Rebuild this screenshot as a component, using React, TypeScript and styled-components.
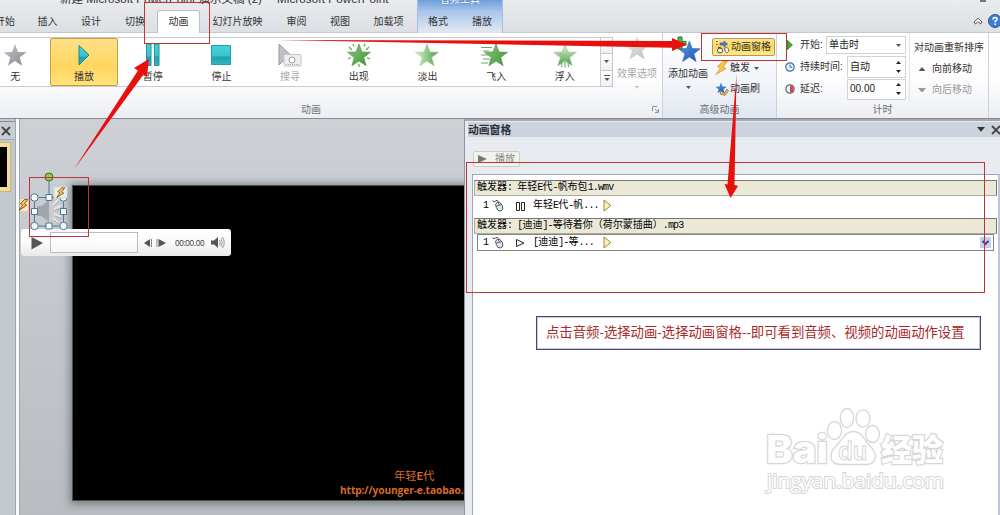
import React from 'react';
import styled, { createGlobalStyle, css } from 'styled-components';

const Global = createGlobalStyle`
  * { box-sizing: border-box; }
  body { margin: 0; overflow: hidden; background: #c6cacf; }
`;

const UI = `"Liberation Sans", "Noto Sans CJK SC", sans-serif`;
const SIM = `"Liberation Mono", "Noto Sans CJK SC", monospace`;

const Window = styled.div`
  position: relative;
  width: 1000px;
  height: 515px;
  overflow: hidden;
  display: flex;
  flex-direction: column;
  font: 10px/14px ${UI};
  color: #333;
  white-space: nowrap;
`;

/* Title and tabs */
const Header = styled.header`
  height: 33px;
  flex: none;
  display: flex;
  flex-direction: column;
  background: linear-gradient(#e9ebee, #dcdfe3);
  border-bottom: 1px solid #c3c8cf;
`;
const TitleBar = styled.div`
  height: 10px;
  display: flex;
  padding-left: 60px;
  line-height: 14px;
`;
const Title = styled.span<{ $w: number; $space?: number }>`
  width: ${p => p.$w}px;
  flex: none;
  margin-top: -8px;
  font-size: 11.5px;
  color: #333;
  letter-spacing: ${p => p.$space ?? 0}px;
`;
const ContextTitle = styled.div`
  width: 86px;
  height: 33px;
  flex: none;
  background: linear-gradient(#6f9edb, #a9c6ec 35%, #dce5f0 90%);
  border-left: 1px solid #a5bfe2;
  border-right: 1px solid #a5bfe2;
  color: #fff;
  text-align: center;
  line-height: 14px;
  text-shadow: 0 0 2px #3668a8;
  span { display: block; margin-top: -7px; }
`;
const WindowButtons = styled.div`
  margin-left: auto;
  width: 44px;
  display: flex;
  gap: 18px;
  i { width: 6px; height: 2px; background: #777; }
  i:first-child { background: #eee; }
`;
const Tabs = styled.nav`
  height: 22px;
  display: flex;
  align-items: stretch;
`;
const Tab = styled.div<{ $w: number; $active?: boolean }>`
  width: ${p => p.$w}px;
  flex: none;
  line-height: 24px;
  display: flex;
  justify-content: center;
  ${p => p.$active && css`
    background: #fff;
    border: 1px solid #b9bfc7;
    border-bottom: 0;
    border-radius: 3px 3px 0 0;
    height: 24px;
    line-height: 22px;
  `}
`;
const TabTools = styled.div`
  margin-left: auto;
  width: 27px;
  display: flex;
  align-items: center;
  gap: 5px;
  svg { flex: none; }
`;

/* Ribbon */
const Ribbon = styled.section`
  height: 86px;
  flex: none;
  display: flex;
  background: linear-gradient(#fff, #fdfdfe 55%, #eceef2);
  border-bottom: 1px solid #858b93;
`;
const Group = styled.div<{ $w: number; $tint?: boolean }>`
  width: ${p => p.$w}px;
  flex: none;
  display: flex;
  flex-direction: column;
  border-right: 1px solid #cdd2d9;
  ${p => p.$tint && 'background: linear-gradient(#fff, #f1f4f9 60%, #e1e7ef);'}
`;
const GroupBody = styled.div`
  height: 68px;
  flex: none;
  display: flex;
`;
const GroupName = styled.div<{ $pad?: number }>`
  height: 17px;
  display: flex;
  align-items: center;
  justify-content: ${p => (p.$pad ? 'flex-start' : 'center')};
  padding-left: ${p => p.$pad ?? 0}px;
  color: #6b7078;
  svg { margin-left: auto; margin-right: 3px; }
`;
const Gallery = styled.div`
  width: 601px;
  height: 50px;
  margin-top: 4px;
  display: flex;
  overflow: hidden;
  border: 1px solid #c9cdd2;
  border-left: 0;
  background: #fff;
`;
const Effect = styled.div<{ $active?: boolean; $muted?: boolean }>`
  width: 68.7px;
  flex: none;
  height: 48px;
  display: flex;
  flex-direction: column;
  align-items: center;
  padding-top: 5px;
  color: ${p => (p.$muted ? '#a5a5a5' : '#333')};
  &:first-child { margin-left: -19px; }
  svg { height: 24px; flex: none; overflow: visible; }
  span { line-height: 13px; margin-top: 3px; }
  ${p => p.$active && css`
    background: linear-gradient(#ffe08a, #ffd75f 60%, #ffe27c);
    border: 1px solid #c79a3c;
    border-radius: 2px;
    padding-top: 4px;
  `}
`;
const GalleryScroll = styled.div`
  width: 12px;
  height: 50px;
  margin-top: 4px;
  display: flex;
  flex-direction: column;
  border: 1px solid #c3c7cc;
  border-left: 0;
  div {
    flex: 1;
    display: flex;
    align-items: center;
    justify-content: center;
    background: linear-gradient(#fff, #eef0f3);
  }
  div + div { border-top: 1px solid #c3c7cc; }
`;
const BigButton = styled.div<{ $w: number; $muted?: boolean; $gap: number }>`
  width: ${p => p.$w}px;
  flex: none;
  display: flex;
  flex-direction: column;
  align-items: center;
  padding-top: 2px;
  color: ${p => (p.$muted ? '#a8a8a8' : '#333')};
  svg { flex: none; overflow: visible; }
  span { line-height: 14px; margin: ${p => p.$gap}px 0 5px; }
`;
const Stack = styled.div<{ $w: number }>`
  width: ${p => p.$w}px;
  flex: none;
  display: flex;
  flex-direction: column;
  padding-top: 5px;
  gap: 3px;
`;
const TimingStack = styled(Stack)`
  padding: 1px 0 0 8px;
  gap: 0;
`;
const Tool = styled.div<{ $active?: boolean }>`
  width: 63px;
  height: 18px;
  margin-left: -1px;
  display: flex;
  align-items: center;
  padding-left: 2px;
  gap: 1px;
  border: 1px solid transparent;
  svg { flex: none; }
  svg:last-child { margin-left: 3px; }
  ${p => p.$active && css`
    background: linear-gradient(#ffe391, #fbd75a 50%, #ffe98e);
    border-color: #b8985a;
    border-radius: 2px;
  `}
`;
const TimingRow = styled.div`
  height: 22px;
  display: flex;
  align-items: center;
  svg { flex: none; }
`;
const TimingLabel = styled.span<{ $w: number }>`
  width: ${p => p.$w}px;
  padding-left: 5px;
  flex: none;
`;
const Field = styled.div<{ $w: number; $h: number }>`
  width: ${p => p.$w}px;
  height: ${p => p.$h}px;
  background: #fff;
  border: 1px solid #d0d3d8;
  display: flex;
  align-items: center;
  justify-content: space-between;
  padding: 0 4px 0 2px;
  color: #222;
`;
const OrderColumn = styled.div`
  width: 83px;
  padding: 8px 0 0 4px;
  border-left: 1px solid #e2e4e8;
  display: flex;
  flex-direction: column;
  gap: 7px;
`;
const Order = styled.div<{ $muted?: boolean }>`
  display: flex;
  align-items: center;
  gap: 6px;
  padding-left: 4px;
  color: ${p => (p.$muted ? '#999' : '#333')};
`;

/* Workspace */
const Workspace = styled.main`
  height: 396px;
  flex: none;
  display: flex;
`;
const Thumbs = styled.aside`
  width: 15px;
  flex: none;
  padding-top: 2px;
  background: #c3c8ce;
`;
const ThumbsHead = styled.div`
  height: 19px;
  background: #c8cdd3;
  border-top: 1px solid #8a9097;
  border-bottom: 1px solid #a4a9af;
  display: flex;
  align-items: center;
`;
const Thumb = styled.div`
  width: 10px;
  height: 48px;
  margin-top: 3px;
  background: #000;
  border: solid #f3dd98;
  border-width: 4px 3px 4px 0;
  outline: 1px solid #c9b57c;
`;
const Splitter = styled.div`
  width: 5px;
  flex: none;
  background: #f8f9fb;
  border: solid #a1a6ad;
  border-width: 0 1px;
`;
const Canvas = styled.div`
  width: 444px;
  flex: none;
  overflow: hidden;
  padding: 66px 0 0 52px;
  background: linear-gradient(#cdd1d6, #b9bdc2);
`;
const Slide = styled.div`
  width: 400px;
  height: 316px;
  background: #000;
  border: 1px solid #4c4e50;
  box-shadow: 0 1px 8px 2px rgba(60, 70, 70, .55);
  display: flex;
  flex-direction: column;
  justify-content: flex-end;
  padding: 0 0 2px 267px;
  color: #d96b25;
  font: 11.3px/14px Lato, "Noto Sans CJK SC", sans-serif;
  span:first-child { padding-left: 54px; }
`;
const Url = styled.span`
  font: bold 10.1px/15px "Open Sans", sans-serif;
  letter-spacing: -.06px;
`;
const Pane = styled.aside`
  width: 536px;
  flex: none;
  padding: 2px 0 0 3px;
  background: #e8ebf0;
  border-left: 1px solid #8d949d;
  border-top: 2px solid #a2a9b1;
  display: flex;
  flex-direction: column;
`;
const PaneHead = styled.div`
  height: 15px;
  margin-top: -1px;
  flex: none;
  display: flex;
  align-items: center;
  background: #ccd3dc;
  font-weight: bold;
  font-size: 10.8px;
  color: #2c3038;
  overflow: hidden;
  svg { flex: none; }
  svg:first-of-type { margin-left: auto; margin-right: 5px; }
  svg:last-of-type { margin-right: -2px; }
`;
const PlayButton = styled.div`
  width: 47px;
  height: 16px;
  margin: 14px 0 7px 5px;
  flex: none;
  display: flex;
  align-items: center;
  gap: 8px;
  padding-left: 4px;
  border: 1px solid #cfcdbe;
  border-radius: 2px;
  background: #f2f2ec;
  color: #888;
`;
const List = styled.div`
  width: 529px;
  margin-left: 4px;
  flex: 1;
  padding: 5px 1px 0 1px;
  background: #fff;
  border: solid #98a8bd;
  border-width: 1px 3px 0 1px;
  border-right-color: #bec6d8;
  font: 10px/14px ${SIM};
  color: #000;
`;
const Latin = styled.span`
  letter-spacing: -.85px;
`;
const Trigger = styled.div`
  height: 16px;
  display: flex;
  align-items: center;
  white-space: pre;
  padding-left: 2px;
  background: #ebe8d8;
  border: 1px solid #77766e;
  border-bottom-color: #aeac9f;
  border-left-color: #aeac9f;
`;
const Entry = styled.div<{ $selected?: boolean }>`
  height: 17px;
  width: 517px;
  margin: ${p => (p.$selected ? '0 0 0 3px' : '1px 0 4px 3px')};
  border: 1px solid ${p => (p.$selected ? '#85867f' : 'transparent')};
  display: flex;
  align-items: center;
  padding: 0 2px 0 5px;
  svg { flex: none; }
`;
const Cell = styled.span<{ $w: number }>`
  width: ${p => p.$w}px;
  flex: none;
  display: flex;
  align-items: center;
`;
const MenuArrow = styled.div`
  width: 11px;
  height: 11px;
  margin-left: auto;
  background: #c3cdf3;
  border-radius: 1px;
  display: flex;
  align-items: center;
  justify-content: center;
`;

/* Objects floating over the slide canvas */
const AudioObject = styled.svg`
  position: absolute;
  left: 18px;
  top: 170px;
`;
const Player = styled.div`
  position: absolute;
  left: 21px;
  top: 229px;
  width: 210px;
  height: 27px;
  display: flex;
  align-items: center;
  padding: 0 6px 0 10px;
  border-radius: 3px;
  background: linear-gradient(#fff, #fafafa 50%, #e9e9eb);
  color: #444;
  font-size: 8.3px;
  svg { flex: none; }
  time { margin: 0 7px 0 8px; letter-spacing: -.4px; }
`;
const Track = styled.div`
  width: 88px;
  height: 21px;
  margin: 0 6px 0 7px;
  flex: none;
  background: linear-gradient(#fff, #f6f6f7);
  border: 1px solid #bcbcbe;
`;
const Mark = styled.div<{ $x: number; $y: number; $w: number; $h: number }>`
  position: absolute;
  left: ${p => p.$x}px;
  top: ${p => p.$y}px;
  width: ${p => p.$w}px;
  height: ${p => p.$h}px;
  border: 1px solid #c03436;
`;
const Arrows = styled.svg`
  position: absolute;
  left: 0;
  top: 0;
`;
const Note = styled.div`
  position: absolute;
  left: 536px;
  top: 316px;
  width: 445px;
  height: 34px;
  padding-left: 9px;
  border: 1px solid #45457c;
  outline: 1px solid #c9c9de;
  outline-offset: -2px;
  background: #fff;
  color: #a82a2a;
  font: 13.36px/32px ${UI};
`;
const Watermark = styled.div`
  position: absolute;
  left: 764px;
  top: 404px;
  width: 184px;
  height: 94px;
`;

const STAR = 'M12 1 L14.9 9 L23.4 9.3 L16.7 14.5 L19.1 22.7 L12 18 L4.9 22.7 L7.3 14.5 L.6 9.3 L9.1 9 Z';
const BOLT = 'M8 .5 L2.5 5.5 L5.5 7 L1 13.5 L11 7.5 L8 5.8 L12.5 .5Z';

const Defs = () => (
  <defs>
    <linearGradient id="teal" x2="0" y2="1"><stop offset="0" stopColor="#48d3dc" /><stop offset=".55" stopColor="#38c3ce" /><stop offset=".6" stopColor="#229fad" /><stop offset="1" stopColor="#36b6c2" /></linearGradient>
    <linearGradient id="green" x2="1" y2="1"><stop offset="0" stopColor="#8cc77a" /><stop offset="1" stopColor="#3f9436" /></linearGradient>
    <linearGradient id="fade" x2="1" y2="0"><stop offset="0" stopColor="#d9efd0" /><stop offset="1" stopColor="#4da043" /></linearGradient>
    <linearGradient id="float" x2="0" y2="1"><stop offset="0" stopColor="#e3f1df" /><stop offset="1" stopColor="#4f9f47" /></linearGradient>
    <linearGradient id="grey" x2="1" y2="1"><stop offset="0" stopColor="#c4c6ca" /><stop offset="1" stopColor="#84878c" /></linearGradient>
    <linearGradient id="pale" x2="1" y2="1"><stop offset="0" stopColor="#e6e6e9" /><stop offset="1" stopColor="#bfc0c5" /></linearGradient>
    <linearGradient id="blue" x2="1" y2="1"><stop offset="0" stopColor="#5b9be8" /><stop offset="1" stopColor="#1c54b4" /></linearGradient>
  </defs>
);

const Star = ({ fill, stroke, size = 24, children }: { fill: string; stroke?: string; size?: number; children?: React.ReactNode }) => (
  <svg width={size} height={size} viewBox="0 0 24 24"><path d={STAR} fill={fill} stroke={stroke} strokeWidth=".6" />{children}</svg>
);
const Down = ({ c = '#555', up = false, w = 5 }: { c?: string; up?: boolean; w?: number }) => (
  <svg width={w} height={w * 0.6} viewBox="0 0 10 6"><path d={up ? 'M0 6 L5 0 L10 6Z' : 'M0 0 H10 L5 6Z'} fill={c} /></svg>
);
const Spin = () => (
  <svg width="5" height="14" viewBox="0 0 5 14"><path d="M0 4 L2.5 1 L5 4Z M0 10 H5 L2.5 13Z" fill="#222" /></svg>
);
const Close = () => (
  <svg width="12" height="10" viewBox="0 0 12 10"><path d="M2 1 L10 9 M10 1 L2 9" stroke="#444" strokeWidth="1.8" /></svg>
);
const Bolt = ({ size = 14 }: { size?: number }) => (
  <svg width={size} height={size} viewBox="0 0 14 14"><path d={BOLT} fill="#f9c64a" stroke="#cf8b1d" strokeWidth=".7" /></svg>
);
const Clock = ({ late }: { late?: boolean }) => (
  <svg width="10" height="10" viewBox="0 0 10 10">
    <circle cx="5" cy="5" r="4.2" fill="#eef4fc" stroke={late ? '#68687e' : '#4270a8'} strokeWidth="1.2" />
    {late ? <path d="M5 1.5 A3.5 3.5 0 0 1 8.5 5 A3.5 3.5 0 0 1 5 8.5Z" fill="#d4444c" /> : <path d="M5 2.5 V5.2 H7.3" fill="none" stroke="#35649b" />}
  </svg>
);
const Mouse = () => (
  <svg width="12" height="13" viewBox="0 0 12 13">
    <path d="M.5 1.5 Q2 4 3.5 2 M3.5 2 Q5 .5 6.5 2.5" fill="none" stroke="#444" />
    <path d="M3.5 5 Q5.5 2 8 3.5 Q11.5 6.5 10.8 10.5 Q9 12.8 6 11.5 Q4 9 3.5 5Z" fill="#dfe5ec" stroke="#4b5560" />
    <path d="M4.2 7.3 L9.5 5.5 M6 3 L7.5 6.3" stroke="#4b5560" strokeWidth=".8" />
  </svg>
);
const YellowPlay = () => (
  <svg width="9" height="13" viewBox="0 0 9 13"><path d="M1 1 L7.8 6.5 L1 12Z" fill="#fff2b8" stroke="#9a8440" /></svg>
);

export default function App() {
  return (
    <Window>
      <Global />
      <svg width="0" height="0" style={{ position: 'absolute' }}><Defs /></svg>
      <Header>
        <TitleBar>
          <Title $w={217} $space={0.02}>新建 Microsoft PowerPoint 演示文稿 (2)</Title>
          <Title $w={140} $space={0.15}>Microsoft PowerPoint</Title>
          <ContextTitle><span>音频工具</span></ContextTitle>
          <WindowButtons><i /><i /></WindowButtons>
        </TitleBar>
        <Tabs>
          <Tab $w={26}><span style={{ marginLeft: -16 }}>开始</span></Tab>
          <Tab $w={43}>插入</Tab>
          <Tab $w={44}>设计</Tab>
          <Tab $w={44}>切换</Tab>
          <Tab $w={43} $active>动画</Tab>
          <Tab $w={75}>幻灯片放映</Tab>
          <Tab $w={43}>审阅</Tab>
          <Tab $w={44}>视图</Tab>
          <Tab $w={53}>加载项</Tab>
          <Tab $w={46}>格式</Tab>
          <Tab $w={42}>播放</Tab>
          <TabTools>
            <svg width="10" height="9" viewBox="0 0 10 9"><path d="M1 5 L5 1.2 L9 5 L7.5 7 L5 4.6 L2.5 7Z" fill="#fff" stroke="#555" /></svg>
            <svg width="14" height="14" viewBox="0 0 14 14"><circle cx="7" cy="7" r="6.5" fill="#3f7bd0" stroke="#2b5a9f" /><path d="M5 5.5 Q5 3.5 7 3.5 Q9 3.5 9 5.2 Q9 6.4 7.2 7.2 V8.5 M7.2 9.6 V11" fill="none" stroke="#fff" strokeWidth="1.5" /></svg>
          </TabTools>
        </Tabs>
      </Header>

      <Ribbon>
        <Group $w={663}>
          <GroupBody>
            <Gallery>
              <Effect><Star fill="url(#grey)" /><span>无</span></Effect>
              <Effect $active>
                <svg width="12" height="24"><path d="M1 2.5 L11 12 L1 22Z" fill="url(#teal)" stroke="#20858f" /></svg>
                <span>播放</span>
              </Effect>
              <Effect>
                <svg width="16" height="24"><path d="M1.5 1 H6 V22.5 H1.5Z M9.5 1 H14 V22.5 H9.5Z" fill="url(#teal)" stroke="#24909a" /></svg>
                <span>暂停</span>
              </Effect>
              <Effect>
                <svg width="20" height="24"><path d="M.5 2.5 H19.5 V21.5 H.5Z" fill="url(#teal)" stroke="#249eab" /></svg>
                <span>停止</span>
              </Effect>
              <Effect $muted>
                <svg width="24" height="24"><path d="M1 1 L12 11.5 L1 22Z" fill="#bfbfc4" stroke="#97979d" /><rect x="6" y="11.5" width="17" height="11.5" rx="1" fill="#efeff1" stroke="#c5c5c9" /><circle cx="14" cy="17" r="3" fill="#fff" stroke="#9b9ba0" /><path d="M8 21.5 H22" stroke="#aaa" strokeDasharray="1 1" /></svg>
                <span>搜寻</span>
              </Effect>
              <Effect>
                <Star fill="url(#green)" stroke="#438c3b"><path d="M2 4 L5 7 M6 1 L7 3.5 M18 1 L17 3.5 M22 4 L19 7 M1 16 L4 14.5 M23 16 L20 14.5 M12 21 V24" stroke="#67a95d" strokeWidth="1.3" /></Star>
                <span>出现</span>
              </Effect>
              <Effect><Star fill="url(#fade)" stroke="#9aca91" /><span>淡出</span></Effect>
              <Effect>
                <Star fill="url(#green)" stroke="#438c3b"><path d="M-3 4.5 H8 M-1 8 H5 M-3 12 H4 M-1 16 H6 M-3 20 H4" stroke="#69a65f" strokeWidth="1" /></Star>
                <span>飞入</span>
              </Effect>
              <Effect>
                <Star fill="url(#float)" stroke="#9cc494"><path d="M9 20 L8.5 24 M12 19 V24.5 M15 20 L15.5 24" stroke="#67a95d" strokeWidth="1.1" /></Star>
                <span>浮入</span>
              </Effect>
            </Gallery>
            <GalleryScroll>
              <div />
              <div><Down /></div>
              <div><svg width="6" height="7" viewBox="0 0 6 7"><path d="M0 .5 H6" stroke="#555" /><path d="M.5 3 H5.5 L3 6Z" fill="#555" /></svg></div>
            </GalleryScroll>
            <BigButton $w={48} $gap={6} $muted>
              <Star fill="url(#pale)" size={26} />
              <span>效果选项</span>
              <Down c="#b5b5b5" w={4} />
            </BigButton>
          </GroupBody>
          <GroupName $pad={301}>
            动画
            <svg width="7" height="7" viewBox="0 0 7 7"><path d="M.5 5 V.5 H5 M3 3 L6 6 M6.5 3 V6.5 H3" fill="none" stroke="#8b9097" /></svg>
          </GroupName>
        </Group>

        <Group $w={114} $tint>
          <GroupBody>
            <BigButton $w={50} $gap={3}>
              <svg width="30" height="29" viewBox="0 0 30 29">
                <g transform="translate(5 5) scale(.95)"><path d={STAR} fill="url(#blue)" stroke="#2c5ca8" strokeWidth=".6" /></g>
                <path d="M5 2 H9 V6.500 H13 V10 H9 V14 H5 V10 H1 V6.500 H5Z" fill="#55bd45" stroke="#247a22" />
              </svg>
              <span>添加动画</span>
              <Down w={5} />
            </BigButton>
            <Stack $w={62}>
              <Tool $active>
                <svg width="15" height="14" viewBox="0 0 15 14">
                  <path d="M1 1.500 H3 M1 4.500 H3 M5 3 H9 V1 L12.500 4 L9 7 V5 H5Z" fill="#4c7ec4" stroke="#3b68a6" strokeWidth=".8" />
                  <circle cx="5" cy="10.500" r="2.500" fill="#fff" stroke="#444" /><path d="M3 7 L6 8" stroke="#444" />
                  <path d="M9.500 8 Q12 6 13.500 9 Q14.500 12 12 13 Q10 13 9.500 8Z" fill="#f1f1f1" stroke="#555" strokeWidth=".8" />
                </svg>
                <span>动画窗格</span>
              </Tool>
              <Tool><Bolt /><span>触发</span><Down /></Tool>
              <Tool>
                <svg width="14" height="14" viewBox="0 0 14 14"><g transform="scale(.5)"><path d={STAR} fill="url(#blue)" /></g><path d="M6 9 L9 12 L12 7 L13.500 9 L10 13.500 L5 12Z" fill="#f1c65b" stroke="#75664b" strokeWidth=".7" /></svg>
                <span>动画刷</span>
              </Tool>
            </Stack>
          </GroupBody>
          <GroupName>高级动画</GroupName>
        </Group>

        <Group $w={212}>
          <GroupBody>
            <TimingStack $w={132}>
              <TimingRow>
                <svg width="10" height="10" viewBox="0 0 10 10"><path d="M2 0 L7.500 5 L2 10Z" fill="#3ea63a" stroke="#26762a" strokeWidth=".7" /></svg>
                <TimingLabel $w={31}>开始:</TimingLabel>
                <Field $w={80} $h={18}>单击时<Down /></Field>
              </TimingRow>
              <TimingRow>
                <Clock /><TimingLabel $w={52}>持续时间:</TimingLabel>
                <Field $w={59} $h={22}>自动<Spin /></Field>
              </TimingRow>
              <TimingRow>
                <Clock late /><TimingLabel $w={52}>延迟:</TimingLabel>
                <Field $w={59} $h={21}><span>00.00</span><Spin /></Field>
              </TimingRow>
            </TimingStack>
            <OrderColumn>
              <span>对动画重新排序</span>
              <Order><Down up w={8} />向前移动</Order>
              <Order $muted><Down c="#999" w={8} />向后移动</Order>
            </OrderColumn>
          </GroupBody>
          <GroupName>计时</GroupName>
        </Group>
      </Ribbon>

      <Workspace>
        <Thumbs>
          <ThumbsHead><Close /></ThumbsHead>
          <Thumb />
        </Thumbs>
        <Splitter />
        <Canvas>
          <Slide>
            <span>年轻<b>E</b>代</span>
            <Url>http://younger-e.taobao.com</Url>
          </Slide>
        </Canvas>
        <Pane>
          <PaneHead>
            动画窗格
            <Down c="#333" w={8} />
            <Close />
          </PaneHead>
          <PlayButton>
            <svg width="9" height="8"><path d="M0 0 L9 4 L0 8Z" fill="#777" /></svg>播放
          </PlayButton>
          <List>
            <Trigger>触发器<Latin>: </Latin>年轻<Latin>E</Latin>代<Latin>-</Latin>帆布包<Latin>1.wmv</Latin></Trigger>
            <Entry>
              <Cell $w={9}>1</Cell>
              <Cell $w={24}><Mouse /></Cell>
              <svg width="17" height="10"><path d="M.5 1.500 H3.500 V9.500 H.5Z M5.500 1.500 H8.500 V9.500 H5.500Z" fill="#fff" stroke="#222" /></svg>
              <Cell $w={70}>年轻<Latin>E</Latin>代<Latin>-</Latin>帆<Latin>...</Latin></Cell>
              <YellowPlay />
            </Entry>
            <Trigger>触发器<Latin>: [</Latin>迪迪<Latin>]-</Latin>等待着你（荷尔蒙插曲）<Latin>.mp3</Latin></Trigger>
            <Entry $selected>
              <Cell $w={9}>1</Cell>
              <Cell $w={24}><Mouse /></Cell>
              <svg width="17" height="10"><path d="M.5 1.500 L8 5 L.5 8.500Z" fill="#fff" stroke="#222" /></svg>
              <Cell $w={70}><Latin>[</Latin>迪迪<Latin>]-</Latin>等<Latin>...</Latin></Cell>
              <YellowPlay />
              <MenuArrow><svg width="7" height="6"><path d="M.5 1 L3.500 4 L6.500 1" fill="none" stroke="#33406b" strokeWidth="1.800" /></svg></MenuArrow>
            </Entry>
          </List>
        </Pane>
      </Workspace>

      <Player>
        <svg width="12" height="14"><path d="M.5 1 L12 7 L.5 13.500Z" fill="#555" /></svg>
        <Track />
        <svg width="23" height="8"><path d="M6 0 V8 L0 4Z M14.500 0 V8 L22 4Z" fill="#555" /><path d="M7.500 0 V8 M13 0 V8" stroke="#888" /></svg>
        <time>00:00.00</time>
        <svg width="14" height="13" viewBox="0 0 14 13"><path d="M0 4.500 H3 L7 1 V12 L3 8.500 H0Z" fill="#555" /><path d="M8.500 4 Q10 6.500 8.500 9 M10 2.500 Q12.500 6.500 10 10.500 M11.500 1 Q15 6.500 11.500 12" fill="none" stroke="#777" strokeWidth=".8" /></svg>
      </Player>

      <AudioObject width="54" height="62" viewBox="18 170 54 62">
        <rect x="20" y="199" width="8" height="12" fill="#fbe6c8" />
        <g transform="translate(18.500 199) scale(.75 .83)"><path d={BOLT} fill="#f9c64a" stroke="#594208" /></g>
        <path d="M37 206 H41 L49 200 V222 L41 216 H37Z" fill="#a2a5a9" />
        <path d="M53 205 L58 200 M54 209 L61 206 M54 214 L61 217 M53 218 L58 223" stroke="#e4e6e8" strokeWidth="2" />
        <path d="M54 206 L59 201 M55 216 L62 219 M55 210.500 L62 207.500 M54 220 L58 224" stroke="#a2a5a9" strokeWidth="1" />
        <path d="M49 180 V197.500 M34.500 197.500 H63.500 V226 H34.500Z" fill="none" stroke="#557b92" />
        <circle cx="49" cy="177" r="4" fill="#8bcb47" stroke="#466a2c" />
        <g fill="#f3fbff" stroke="#4b7890">
          <circle cx="34.500" cy="197.500" r="3.700" /><circle cx="63.500" cy="197.500" r="3.700" />
          <circle cx="34.500" cy="226" r="3.700" /><circle cx="63.500" cy="226" r="3.700" />
          <path d="M46 194.500 H52 V200.500 H46Z M46 223 H52 V229 H46Z M31.500 208.500 H37.500 V214.500 H31.500Z M60.500 208.500 H66.500 V214.500 H60.500Z" />
        </g>
        <rect x="54" y="187" width="13" height="11" fill="#ececea" stroke="#d2d2d0" />
        <g transform="translate(56 187.500) scale(.7 .75)"><path d={BOLT} fill="#f9c64a" stroke="#594208" /></g>
      </AudioObject>

      <Note>点击音频-选择动画-选择动画窗格--即可看到音频、视频的动画动作设置</Note>

      <Watermark>
        <svg width="184" height="94" viewBox="764 404 184 94" fill="#fff" stroke="#d6d6d6" strokeWidth="1.300">
          <g fontFamily="Inter, sans-serif" fontWeight="800" paintOrder="stroke" strokeWidth="2.400">
            <text x="766" y="463" fontSize="38" textLength="62" lengthAdjust="spacingAndGlyphs">Bai</text>
            <text x="881" y="461" fontSize="31" textLength="62" fontFamily="'Noto Sans CJK SC', sans-serif" fontWeight="900">经验</text>
          </g>
          <ellipse cx="834.500" cy="430.500" rx="7" ry="9" /><ellipse cx="847" cy="418" rx="6.700" ry="9.500" />
          <ellipse cx="863" cy="418.500" rx="7" ry="8.700" /><ellipse cx="872.500" cy="434" rx="7" ry="8.500" />
          <path d="M853.500 431.500 C862 431.500 864 440 870 446 C879 455 876 464.500 866 464.500 H841 C829 464.500 828 454 836 446 C843 439 845 431.500 853.500 431.500Z" />
          <text x="838" y="460" fontSize="25" textLength="29" lengthAdjust="spacingAndGlyphs" fontFamily="Inter, sans-serif" fontWeight="600" strokeWidth="1">du</text>
          <text x="767" y="488" fontSize="20" textLength="177" lengthAdjust="spacingAndGlyphs" fontFamily="'Open Sans', sans-serif" paintOrder="stroke" strokeWidth="2">jingyan.baidu.com</text>
        </svg>
      </Watermark>

      <Mark $x={144} $y={2} $w={66} $h={42} />
      <Mark $x={701} $y={33} $w={86} $h={28} />
      <Mark $x={29} $y={177} $w={60} $h={60} />
      <Mark $x={466} $y={162} $w={519} $h={131} />
      <Arrows width="1000" height="515" fill="#e8100c">
        <path d="M73.500 170 L138 70.500 L134 68 L149 59 L147 77 L143.500 74.500Z" />
        <path d="M277 40 L672 41 V38 L687 44.500 L672 51 V47.800Z" />
        <path d="M736.500 74 L734.500 185 L738 186 L730.500 198 L724.500 184 L727.500 184.500Z" />
      </Arrows>
    </Window>
  );
}
